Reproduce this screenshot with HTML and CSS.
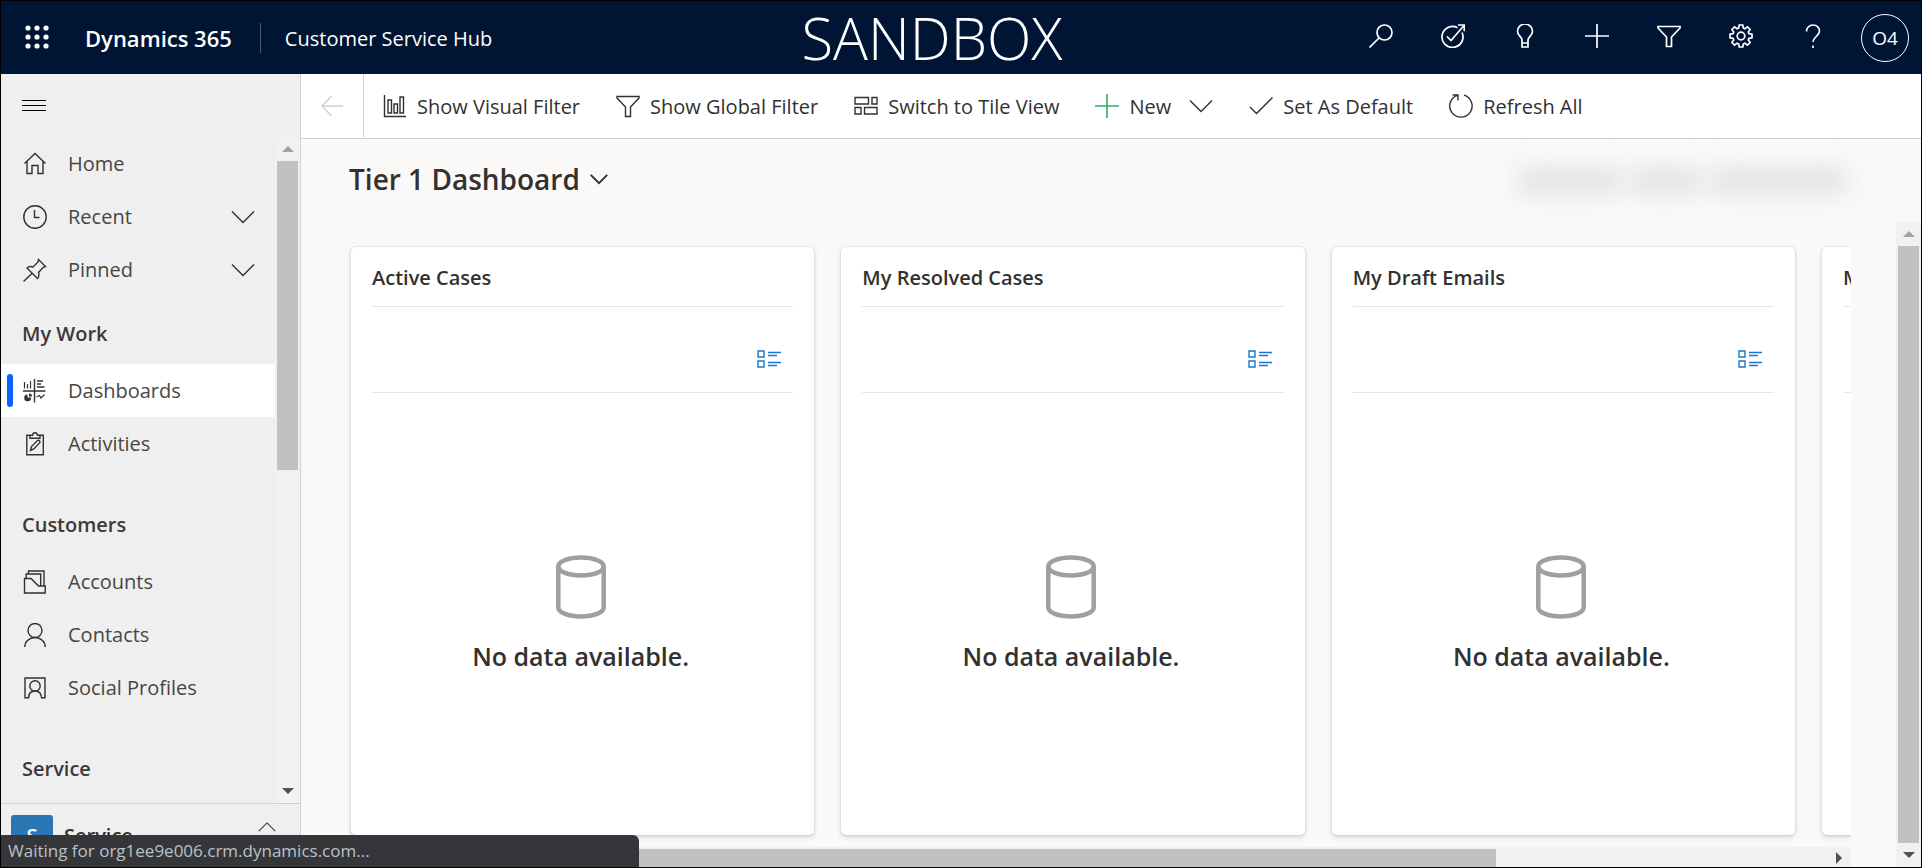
FILE: index.html
```html
<!DOCTYPE html>
<html lang="en">
<head>
<meta charset="utf-8">
<title>Dynamics 365 - Customer Service Hub</title>
<link rel="stylesheet" href="styles.css">
</head>
<body>
<svg class="defs" aria-hidden="true">
  <symbol id="chevron" viewBox="0 0 24 24"><path d="M1 6.500l11 11 11-11"/></symbol>
  <symbol id="funnel" viewBox="0 0 24 24"><path d="M1 2.500h22v1.500l-8.500 9v9.500h-5V13L1 4z"/></symbol>
  <symbol id="plus" viewBox="0 0 24 24"><path d="M12 0v24M0 12h24"/></symbol>
  <symbol id="list" viewBox="0 0 24 18"><path d="M1 1h6v6H1zM1 11h6v6H1zM11 2.500h13M11 5.500h9M11 12.500h13M11 15.500h9"/></symbol>
  <symbol id="cylinder" viewBox="0 0 50 64"><ellipse cx="25" cy="11.500" rx="22.700" ry="9"/><path d="M2.300 11.500v41c0 5 10.200 9 22.700 9s22.700-4 22.700-9v-41"/></symbol>
</svg>
<div class="app">
  <header class="topbar">
    <button class="waffle" aria-label="App launcher">
      <svg viewBox="0 0 24 24"><g fill="currentColor" stroke="none"><circle cx="3" cy="3" r="2.600"/><circle cx="12" cy="3" r="2.600"/><circle cx="21" cy="3" r="2.600"/><circle cx="3" cy="12" r="2.600"/><circle cx="12" cy="12" r="2.600"/><circle cx="21" cy="12" r="2.600"/><circle cx="3" cy="21" r="2.600"/><circle cx="12" cy="21" r="2.600"/><circle cx="21" cy="21" r="2.600"/></g></svg>
    </button>
    <a class="brand" href="#">Dynamics 365</a>
    <a class="app-name" href="#">Customer Service Hub</a>
    <span class="environment">SANDBOX</span>
    <div class="top-actions">
      <button aria-label="Search"><svg viewBox="0 0 24 24"><circle cx="15.500" cy="8.500" r="7.500"/><path d="M10 14L.5 23.500"/></svg></button>
      <button aria-label="Assistant"><svg viewBox="0 0 24 24"><path d="M16.500 3.700A10.500 10.500 0 1 0 21 8.500M6 12.500l4 4L23 1.500M17 1h6.300v6.300"/></svg></button>
      <button aria-label="Ideas"><svg viewBox="0 0 24 24"><path d="M9 19v-3c0-3-4.500-4.500-4.500-8.500a7.500 7.500 0 0 1 15 0c0 4-4.500 5.500-4.500 8.500v7H9v-4h6"/></svg></button>
      <button aria-label="Create"><svg><use href="#plus"/></svg></button>
      <button aria-label="Advanced find"><svg><use href="#funnel"/></svg></button>
      <button aria-label="Settings"><svg viewBox="0 0 24 24"><circle cx="12" cy="12" r="3.800"/><path d="M10.200 1h3.600l.5 3 1.700.7 2.500-1.800 2.600 2.600L19.300 8l.7 1.700 3 .5v3.600l-3 .5-.7 1.700 1.800 2.500-2.600 2.600-2.500-1.800-1.700.7-.5 3h-3.600l-.5-3-1.700-.7-2.500 1.800-2.600-2.600L4.700 16 4 14.300l-3-.5v-3.600l3-.5L4.700 8 2.900 5.500l2.600-2.600L8 4.700 9.700 4z"/></svg></button>
      <button aria-label="Help"><svg viewBox="0 0 24 24"><path d="M5.500 7.500C5.500 3.500 8.500 1 12 1s6.500 2.500 6.500 6c0 5-6.500 6-6.500 11M12 21.500V24"/></svg></button>
    </div>
    <button class="avatar">O4</button>
  </header>

  <div class="body">
    <aside class="sidebar">
      <button class="menu-toggle" aria-label="Collapse site map"><svg viewBox="0 0 24 12"><path d="M0 1.500h24M0 6.500h24M0 11.500h24"/></svg></button>
      <div class="nav-scroll">
        <nav>
          <ul>
            <li><a href="#"><svg viewBox="0 0 24 24"><path d="M1.500 11.500L12 1.500l10.500 10M4 9.500v12h5v-8h6v8h5v-12"/></svg>Home</a></li>
            <li><a href="#"><svg viewBox="0 0 24 24"><circle cx="12" cy="12" r="11.200"/><path d="M11.500 5v7.500h5"/></svg>Recent<svg class="expand"><use href="#chevron"/></svg></a></li>
            <li><a href="#"><svg viewBox="0 0 24 24"><path d="M15.500 1.500l7 7-2.500 1-4.500 5c1 3 .5 4.500-1 6L4 10c1.500-1.500 3.500-2 6-1l5-5zM9.200 15.200L.5 23.500"/></svg>Pinned<svg class="expand"><use href="#chevron"/></svg></a></li>
          </ul>
          <section>
            <h2>My Work</h2>
            <ul>
              <li><a class="current" href="#"><svg viewBox="0 0 24 24"><path d="M0 12h22.500M11.500 0v23.500M14 2h6M14 5h4M14 8h7.500"/><path stroke-width="1.200" d="M1.500 3v6.500M4.500 5V9.500M7.500 2v7.500M13.500 18l3-1.500 1.500 2.500 3.500-3.500"/><path fill="currentColor" stroke="none" d="M4.500 15.500v3h3.500a3.400 3.400 0 1 1-3.500-3zM6 14.500a3 3 0 0 1 3 3H6z"/></svg>Dashboards</a></li>
              <li><a href="#"><svg viewBox="0 0 24 24"><path d="M7 3.200H3.800v19.600h16.500V3.200H17M7 3.200h2.500c.5-3.200 4.500-3.200 5 0H17v3H7zM7.500 18.500l1-4 6-6c1.500-.8 3 .7 2.300 2.200l-6 6.300z"/></svg>Activities</a></li>
            </ul>
          </section>
          <section>
            <h2>Customers</h2>
            <ul>
              <li><a href="#"><svg viewBox="0 0 24 24"><path d="M1.500 23V8.500H8l7.500 7.500h6.700v7zM3.200 8V4h14.500v12M5.500 4V1H21v15"/></svg>Accounts</a></li>
              <li><a href="#"><svg viewBox="0 0 24 24"><circle cx="12" cy="7.500" r="7"/><path d="M1.800 24c0-5.500 4.500-9.500 10.200-9.500S22.200 18.500 22.200 24"/></svg>Contacts</a></li>
              <li><a href="#"><svg viewBox="0 0 24 24"><path d="M5.500 21.800H2V2h20v19.800h-3.500M5.500 22.500c0-5 2.800-7.500 6.500-7.500s6.500 2.500 6.500 7.500"/><circle cx="12" cy="10" r="5.200"/></svg>Social Profiles</a></li>
            </ul>
          </section>
          <section>
            <h2>Service</h2>
          </section>
        </nav>
        <div class="vbar">
          <i class="arrow up"></i>
          <div class="track"><div class="thumb"></div></div>
          <i class="arrow down"></i>
        </div>
      </div>
      <button class="area-switch"><span class="area-badge">S</span>Service<svg class="collapse"><use href="#chevron"/></svg></button>
    </aside>

    <main>
      <div class="commands">
        <button class="back" aria-label="Back" disabled><svg viewBox="0 0 24 24"><path d="M11.500 2L2 12l9.500 10M2 12h21"/></svg></button>
        <div class="command-list">
          <button><svg viewBox="0 0 24 24"><path d="M1.500 1v21.500H23M5 6h3.500v13H5zM11 10h3.500v9H11zM17 3h3.500v16H17z"/></svg>Show Visual Filter</button>
          <button><svg><use href="#funnel"/></svg>Show Global Filter</button>
          <button><svg viewBox="0 0 24 24"><path d="M1 3.500h13.500v6.500H1zM18 3.500h5v6.500h-5zM1 13.500h6v6.500H1zM10.500 13.500H23v6.500H10.500z"/></svg>Switch to Tile View</button>
          <button><svg class="green"><use href="#plus"/></svg>New<svg class="drop"><use href="#chevron"/></svg></button>
          <button><svg viewBox="0 0 24 24"><path d="M1 13l6.500 6.500L23.500 3.500"/></svg>Set As Default</button>
          <button><svg viewBox="0 0 24 24"><path d="M15 1.200A11.200 11.200 0 1 1 8.500 1.300M3.500 1h5.500v5.500"/></svg>Refresh All</button>
        </div>
      </div>

      <div class="title-row">
        <h1><button>Tier 1 Dashboard<svg><use href="#chevron"/></svg></button></h1>
        <div class="obscured" aria-hidden="true"><i></i><i></i><i></i></div>
      </div>

      <div class="workspace">
        <div class="board">
          <div class="cards">
            <article class="card"><h2>Active Cases</h2><div class="card-tools"><button aria-label="View records"><svg><use href="#list"/></svg></button></div><div class="empty"><svg><use href="#cylinder"/></svg><p>No data available.</p></div></article>
            <article class="card"><h2>My Resolved Cases</h2><div class="card-tools"><button aria-label="View records"><svg><use href="#list"/></svg></button></div><div class="empty"><svg><use href="#cylinder"/></svg><p>No data available.</p></div></article>
            <article class="card"><h2>My Draft Emails</h2><div class="card-tools"><button aria-label="View records"><svg><use href="#list"/></svg></button></div><div class="empty"><svg><use href="#cylinder"/></svg><p>No data available.</p></div></article>
            <article class="card"><h2>M</h2><div class="card-tools"></div></article>
          </div>
          <div class="hbar"><div class="hthumb"></div><i class="arrow right"></i></div>
        </div>
        <div class="vbar">
          <i class="arrow up"></i>
          <div class="track"><div class="thumb"></div></div>
          <i class="arrow down"></i>
        </div>
      </div>
    </main>
  </div>
  <div class="status">Waiting for org1ee9e006.crm.dynamics.com...</div>
</div>
</body>
</html>
```
FILE: styles.css
```css
* { box-sizing: border-box; }
body { margin: 0; font-family: "Open Sans", "Noto Sans", sans-serif; font-size: 20px; color: #323130; }
h1, h2, p, ul { margin: 0; padding: 0; }
ul { list-style: none; }
a { color: inherit; text-decoration: none; }
button { font: inherit; color: inherit; background: none; border: 0; padding: 0; display: flex; align-items: center; }
svg { width: 24px; height: 24px; flex: none; fill: none; stroke: currentColor; stroke-width: 1.4; }
.defs { position: absolute; width: 0; height: 0; }

.app { position: relative; display: flex; flex-direction: column; height: 100vh; border: 1px solid #000; overflow: hidden; background: #faf9f8; }

.topbar { position: relative; display: flex; align-items: center; flex: none; height: 73px; padding: 0 12px 0 24px; background: #001433; color: #fff; }
.topbar svg { stroke-width: 1.7; }
.waffle { padding-bottom: 2px; }
.brand { margin-left: 36px; padding-right: 28px; border-right: 1px solid #4a5870; font-size: 22px; font-weight: 600; line-height: 30px; }
.app-name { margin-left: 24px; padding-top: 2px; }
.environment { position: absolute; top: 0; left: 0; right: 58px; margin: 0 auto; width: max-content; font-size: 58px; font-weight: 300; line-height: 73px; }
.top-actions { display: flex; align-self: flex-start; margin-left: auto; }
.top-actions button { width: 72px; height: 70px; justify-content: center; }
.avatar { width: 48px; height: 48px; margin-left: 12px; justify-content: center; border: 1px solid #fff; border-radius: 50%; font-size: 19px; }

.body { display: flex; flex: 1; min-height: 0; }

.sidebar { display: flex; flex-direction: column; flex: none; width: 300px; background: #efefef; border-right: 1px solid #d2d0ce; }
.menu-toggle { height: 63px; padding: 0 0 2px 21px; flex: none; }
.menu-toggle svg { height: 12px; stroke: #000; stroke-width: 1; }
.nav-scroll { display: flex; flex: 1; min-height: 0; }
nav { flex: 1; overflow: hidden; }
nav section { margin-top: 24px; }
nav ul + section { margin-top: 7px; }
nav section + section { margin-top: 24px; }
nav h2 { padding-left: 21px; font-size: 20px; font-weight: 600; line-height: 61px; color: #3b3a39; }
nav a { position: relative; display: flex; align-items: center; gap: 21px; height: 53px; padding: 0 20px 0 22px; color: #484644; }
nav a svg { color: #323130; }
nav .expand { margin-left: auto; }
.current { background: #fff; }
.current::before { content: ""; position: absolute; left: 6px; top: 10px; bottom: 10px; width: 6px; border-radius: 3px; background: #0b62ff; }
.area-switch { flex: none; height: 64px; padding: 0 24px 0 10px; gap: 11px; border-top: 1px solid #d2d0ce; font-weight: 600; }
.area-badge { width: 42px; height: 42px; border-radius: 3px; background: #2a76b5; color: #fff; line-height: 42px; text-align: center; }
.collapse { width: 18px; height: 18px; margin: 0 0 18px auto; transform: rotate(180deg); }

.vbar { display: flex; flex-direction: column; align-items: center; flex: none; width: 25px; padding: 9px 0; background: #f1f1f1; }
.track { flex: 1; width: 21px; margin: 9px 0; }
.thumb { height: 100%; background: #c1c1c1; }
.sidebar .thumb { height: 50%; }
.arrow { width: 0; height: 0; border: 6px solid transparent; }
.up { border-top: 0; border-bottom-color: #a3a3a3; }
.down { border-bottom: 0; border-top-color: #505050; }
.right { border-right: 0; border-left-color: #505050; }

main { display: flex; flex-direction: column; flex: 1; min-width: 0; }
.commands { display: flex; flex: none; height: 65px; background: #fff; border-bottom: 1px solid #d2d0ce; }
.back { width: 63px; margin-bottom: 1px; justify-content: center; border-right: 1px solid #d2d0ce; color: #d2d0ce; }
.command-list { display: flex; gap: 36px; padding-left: 19px; white-space: nowrap; }
.command-list button { gap: 10px; }
.command-list .green { stroke: #2fae60; stroke-width: 1.6; }
.command-list .drop { margin-left: 8px; }

.title-row { display: flex; justify-content: space-between; flex: none; height: 83px; padding: 0 35px 0 48px; }
.title-row h1 { font-size: 28px; font-weight: 600; }
.title-row h1 button { height: 83px; padding-bottom: 3px; gap: 10px; }
.title-row h1 svg { width: 18px; height: 18px; stroke-width: 2.5; }
.obscured { display: flex; align-items: center; gap: 12px; width: 385px; padding: 0 40px 0 18px; }
.obscured i { flex: 3; height: 20px; background: #dcdbda; filter: blur(12px); }
.obscured i:nth-child(2) { flex: 2; }
.obscured i:nth-child(3) { flex: 4; }

.workspace { display: flex; flex: 1; min-height: 0; }
.board { display: flex; flex-direction: column; flex: 1; min-width: 0; margin: 0 45px; overflow: hidden; }
.cards { display: flex; flex: 1; gap: 27px; padding: 25px 0 12px 5px; }
.card { display: flex; flex-direction: column; flex: none; width: calc((100% - 110px) / 3); padding: 0 21px; background: #fff; border-radius: 5px; box-shadow: 0 2px 5px rgba(0, 0, 0, .16), 0 0 2px rgba(0, 0, 0, .14); }
.card h2 { height: 60px; border-bottom: 1px solid #e6e6e6; font-size: 20px; font-weight: 600; line-height: 62px; }
.card-tools { display: flex; justify-content: flex-end; align-items: center; height: 86px; padding: 18px 12px 0 0; border-bottom: 1px solid #e6e6e6; }
.card-tools svg { height: 18px; stroke: #1976d2; }
.empty { display: flex; flex-direction: column; align-items: center; justify-content: center; flex: 1; gap: 19px; padding-right: 4px; font-size: 25px; font-weight: 600; line-height: 36px; }
.empty svg { width: 50px; height: 64px; stroke: #a19f9d; stroke-width: 4.5; }
.hbar { display: flex; align-items: center; justify-content: space-between; flex: none; height: 20px; padding: 2px 9px 0 24px; background: #f1f1f1; }
.hthumb { width: 76.5%; height: 18px; background: #c1c1c1; }

.status { position: absolute; left: 0; bottom: 0; width: 638px; height: 32px; padding-left: 7px; border-radius: 0 6px 0 0; background: #35363a; color: #bdc1c6; font-size: 17px; line-height: 32px; }
```
